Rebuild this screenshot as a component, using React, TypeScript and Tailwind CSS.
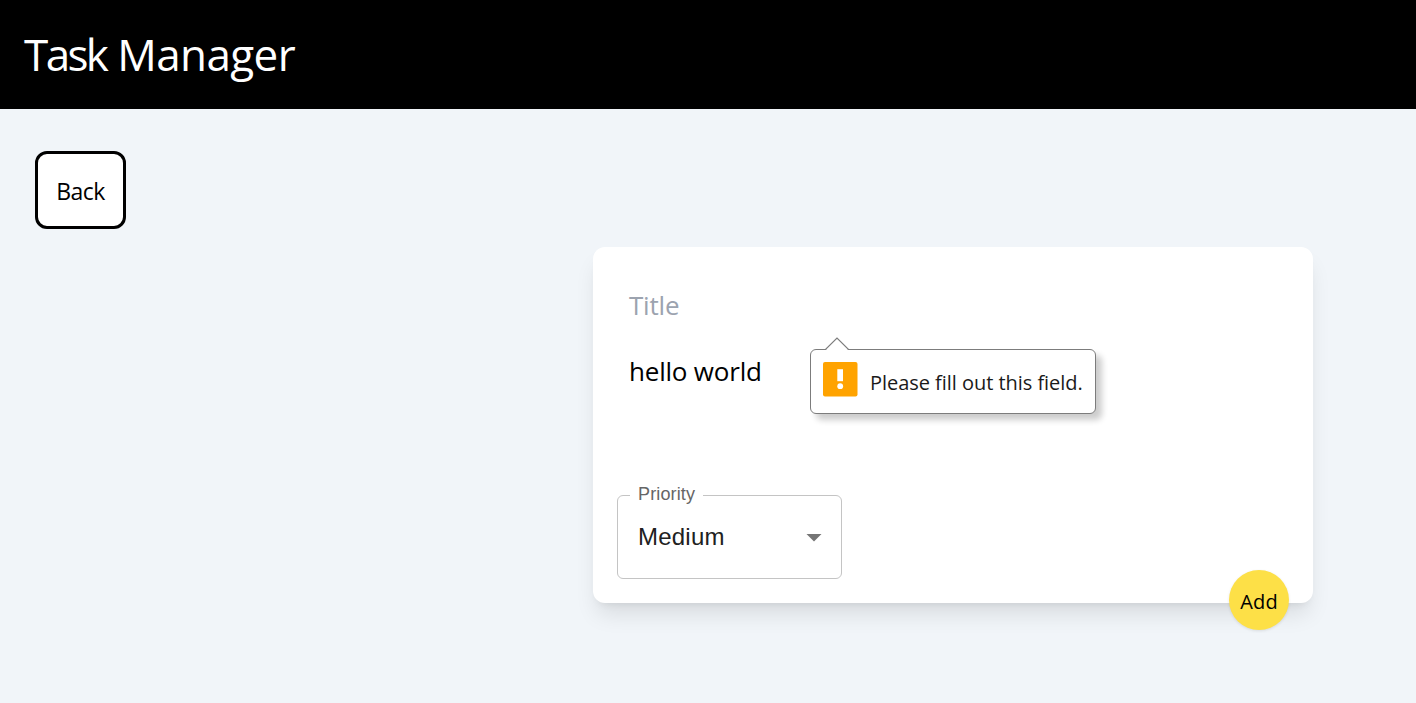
import React from "react";

const segoe = "font-['Open_Sans','Noto_Sans',sans-serif]";

function ValidationTip() {
  return (
    <div className="absolute left-[217px] top-[102px] flex h-[65px] w-[286px] rounded-[6px] border border-[#7c7c7c] bg-white pl-[12px] pt-[12px] shadow-[6px_6px_6px_rgba(0,0,0,0.2)]">
      <svg className="absolute -top-[13px] left-[13px]" width="26" height="14" viewBox="0 0 26 14">
        <path d="M1.5 13.5 13 1.5l11.500 12z" fill="#fff" />
        <path d="M.5 12.500H1.500L13 1l11.500 11.500h1" fill="none" stroke="#7c7c7c" strokeWidth="1.200" />
        <path d="M2 13.500h22" stroke="#fff" strokeWidth="1.500" />
      </svg>
      <svg className="shrink-0" width="35" height="35" viewBox="0 0 35 35">
        <rect width="34.500" height="34.500" rx="2" fill="#ffa300" />
        <path d="M14.300 7.200h5.700v12h-5.700z" fill="#fff" />
        <circle cx="17.200" cy="24.200" r="2.900" fill="#fff" />
      </svg>
      <span className="ml-[12px] mt-[7px] whitespace-nowrap text-[20px] leading-[28px] tracking-[-0.040px] text-[#1a1a1a]">
        Please fill out this field.
      </span>
    </div>
  );
}

function PrioritySelect() {
  return (
    <div className="relative ml-6 flex h-[84px] w-[225px] items-center justify-between rounded-[6px] border border-[#c4c4c4] pl-5 pr-[19px] font-['Liberation_Sans',Arial,sans-serif]">
      <span className="absolute -top-[14px] left-[12px] bg-white pl-2 pr-2 text-[18px] leading-6 tracking-[0.14px] text-[#666]">
        Priority
      </span>
      <span className="text-[24px] leading-[34px] tracking-[0.22px] text-[#212121]">Medium</span>
      <svg width="16" height="8" viewBox="0 0 16 8" className="mt-[2px]">
        <path d="M.500 0h15L8 7.500z" fill="#757575" />
      </svg>
    </div>
  );
}

export default function App() {
  return (
    <div className={`min-h-screen bg-[#f1f5f9] text-black ${segoe}`}>
      <header className="flex h-[109px] items-center bg-black px-6 pb-[2px]">
        <h1 className="text-[44px] leading-[54px] tracking-[-0.6px] text-white">
          <span className="tracking-[-2.6px]">Task</span> Manager
        </h1>
      </header>
      <main className="pl-[35px] pt-[42px]">
        <button className="flex h-[78px] w-[91px] items-center justify-center rounded-[12px] border-[3px] border-black bg-white pt-[2px] text-[23px] tracking-[-0.5px]">
          Back
        </button>
        <form className="relative ml-[558px] mt-[18px] flex h-[356px] w-[720px] flex-col rounded-[12px] bg-white pt-[38px] shadow-[0_15px_22px_-4px_rgba(0,0,0,0.1),0_6px_9px_-6px_rgba(0,0,0,0.1)]">
          <div className="ml-9 h-[42px] text-[26px] leading-[40px] tracking-[-0.2px] text-[#9ca3af]">Title</div>
          <div className="ml-9 mt-[24px] h-[144px] text-[26px] leading-[40px] tracking-[-0.2px]">hello world</div>
          <PrioritySelect />
          <ValidationTip />
          <button type="button" className="absolute -bottom-[27px] right-6 flex size-[60px] items-center justify-center rounded-full bg-[#fde047] pt-[3px] text-[20px] tracking-[0.2px] shadow-[0_1px_3px_rgba(0,0,0,0.1)]">
            Add
          </button>
        </form>
      </main>
    </div>
  );
}
